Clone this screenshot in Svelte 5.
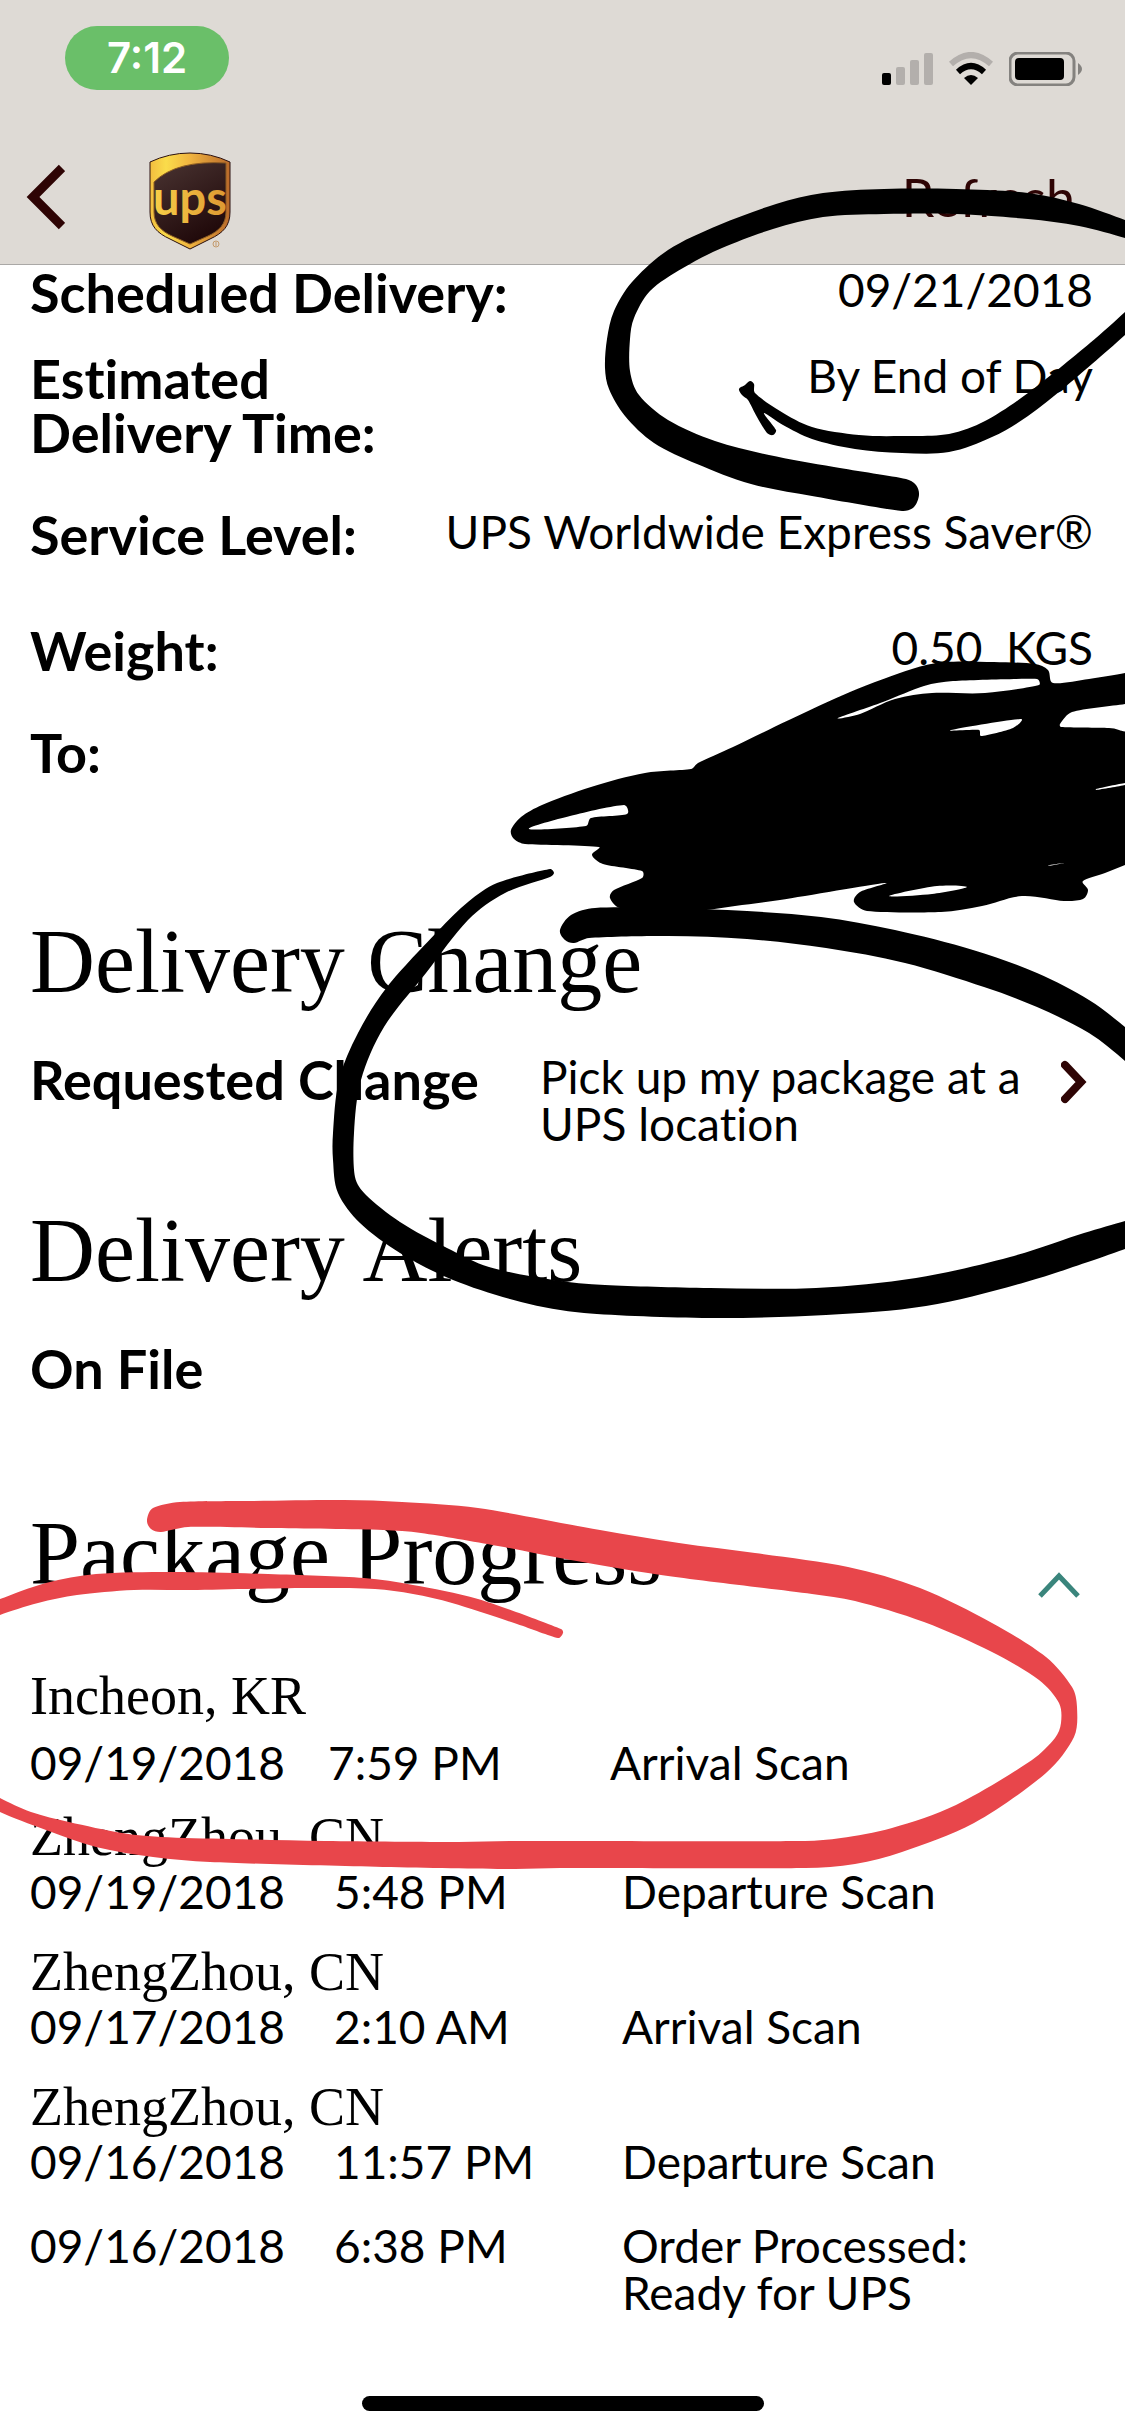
<script>
  const details = [
    { label: 'Scheduled Delivery:', value: '09/21/2018', space: 'tight' },
    { label: 'Estimated Delivery Time:', value: 'By End of Day', space: 'normal' },
    { label: 'Service Level:', value: 'UPS Worldwide Express Saver®', space: 'loose' },
    { label: 'Weight:', value: '0.50\u00a0 KGS', space: 'normal' },
    { label: 'To:', value: '', space: 'none' }
  ];

  const stops = [
    {
      place: 'Incheon, KR',
      latest: true,
      scans: [{ date: '09/19/2018', time: '7:59 PM', text: 'Arrival Scan' }]
    },
    {
      place: 'ZhengZhou, CN',
      scans: [{ date: '09/19/2018', time: '5:48 PM', text: 'Departure Scan' }]
    },
    {
      place: 'ZhengZhou, CN',
      scans: [{ date: '09/17/2018', time: '2:10 AM', text: 'Arrival Scan' }]
    },
    {
      place: 'ZhengZhou, CN',
      scans: [
        { date: '09/16/2018', time: '11:57 PM', text: 'Departure Scan' },
        { date: '09/16/2018', time: '6:38 PM', text: 'Order Processed: Ready for UPS' }
      ]
    }
  ];

  let open = $state(true);

  // Closed Catmull-Rom curve through a flat list of x, y pairs.
  function smooth(flat) {
    const p = [];
    for (let i = 0; i < flat.length; i += 2) p.push([flat[i], flat[i + 1]]);
    const n = p.length;
    let d = `M${p[0][0]} ${p[0][1]}`;
    for (let i = 0; i < n; i++) {
      const a = p[(i + n - 1) % n];
      const b = p[i];
      const c = p[(i + 1) % n];
      const e = p[(i + 2) % n];
      // Handles never reach further than a third of the segment, so corners stay clean.
      const len = Math.hypot(c[0] - b[0], c[1] - b[1]);
      const handle = (u, v) => {
        const m = Math.hypot(v[0] - u[0], v[1] - u[1]) || 1;
        const k = Math.min(m / 6, len / 3) / m;
        return [(v[0] - u[0]) * k, (v[1] - u[1]) * k];
      };
      const h1 = handle(a, c);
      const h2 = handle(b, e);
      d += `C${b[0] + h1[0]} ${b[1] + h1[1]} ${c[0] - h2[0]} ${c[1] - h2[1]} ${c[0]} ${c[1]}`;
    }
    return d + 'Z';
  }

  const dateLoop = [
    1145,228, 1125,220, 1079,204, 1028,193, 956,189, 884,189, 823,193, 776,204, 719,225, 668,250,
    632,282, 614,311, 607,339, 605,368, 609,389, 625,416, 654,443, 697,464, 751,484, 812,496,
    902,511, 914,507, 919,495, 916,485, 906,479, 834,467, 769,455, 715,441, 668,420, 639,395,
    630,371, 630,339, 634,318, 650,291, 683,268, 722,248, 773,229, 823,217, 884,214, 956,214,
    1028,219, 1079,226, 1125,238, 1145,246
  ];
  const dateTail = [
    1145,292, 1125,312, 1090,343, 1028,393, 985,421, 949,434, 902,436, 859,435, 812,427, 780,411,
    755,393, 754,384, 750,381, 745,385, 739,389, 742,395, 748,400, 757,417, 767,433, 773,435,
    776,430, 764,413, 783,425, 812,439, 855,449, 902,453, 949,452, 992,437, 1028,416, 1065,387,
    1100,357, 1125,335, 1145,315
  ];
  const changeLoop = [
    550,869, 497,883, 468,902, 439,930, 387,987, 358,1033, 339,1080, 333,1133, 333,1160, 338,1193,
    360,1223, 400,1253, 453,1280, 521,1302, 584,1313, 710,1318, 826,1315, 926,1306, 1026,1282,
    1125,1249, 1145,1240, 1145,1214, 1125,1221, 1084,1233, 1010,1257, 916,1278, 816,1288, 710,1288,
    605,1285, 553,1280, 489,1267, 447,1248, 400,1222, 366,1195, 355,1177, 354,1133, 361,1080,
    384,1027, 426,973, 468,920, 505,893, 550,877, 554,873
  ];
  const changeArc = [
    1145,1045, 1125,1027, 1089,1000, 1037,973, 973,950, 895,930, 821,917, 747,911, 668,908,
    595,908, 571,915, 560,930, 565,940, 574,943, 589,938, 668,936, 747,939, 826,948, 905,963,
    984,987, 1037,1007, 1089,1033, 1125,1061, 1145,1082
  ];
  const redaction = [
    [
      511,830, 521,817, 542,805, 591,787, 645,773, 691,769, 698,763, 733,747, 789,720, 850,692,
      912,669, 945,662, 994,662, 1035,664, 1048,670, 1053,683, 1089,679, 1125,673, 1145,669,
      1145,700, 1125,704, 1072,712, 1060,724, 1061,727, 1109,728, 1119,730, 1145,742, 1145,856,
      1125,865, 1105,873, 1083,881, 1088,890, 1083,899, 1064,901, 1022,896, 982,906, 941,912,
      867,911, 854,902, 860,892, 885,883, 780,900, 735,906, 694,911, 620,908, 610,898, 614,890,
      642,878, 642,871, 603,864, 592,855, 599,847, 525,844, 514,839
    ],
    [838,718, 860,714, 895,699, 932,693, 985,693, 1039,685, 1037,679, 953,681, 924,686, 883,702],
    [951,730, 1021,719, 1013,728, 981,736, 979,730],
    [529,829, 570,816, 624,805, 627,814, 591,818, 586,826],
    [889,896, 937,886, 967,887, 932,894],
    [1096,789, 1125,783, 1125,785, 1096,790],
    [1048,866, 1064,863, 1050,865]
  ];
  const scanLoop = [
    147,1520, 153,1508, 180,1502, 249,1501, 344,1500, 402,1502, 478,1508, 600,1530, 679,1543,
    755,1553, 848,1567, 920,1588, 992,1623, 1046,1657, 1072,1687, 1077,1707, 1074,1737, 1046,1773,
    974,1823, 902,1852, 855,1864, 805,1868, 560,1868, 513,1869, 383,1867, 210,1862, 153,1857,
    96,1847, 46,1830, 0,1812, -20,1800, -20,1786, 0,1798, 31,1812, 69,1822, 122,1833, 161,1837,
    230,1839, 325,1841, 459,1842, 513,1841, 805,1841, 841,1838, 892,1828, 956,1805, 1032,1760,
    1055,1738, 1061,1723, 1059,1703, 1039,1680, 992,1652, 924,1622, 855,1601, 812,1594, 661,1575,
    560,1558, 498,1546, 421,1533, 383,1530, 268,1528, 188,1527, 161,1532, 151,1529
  ];
  const scanTail = [
    -20,1606, 0,1599, 46,1583, 96,1574, 172,1572, 268,1574, 364,1578, 413,1585, 478,1599, 561,1629,
    563,1633, 558,1638, 517,1624, 452,1603, 413,1594, 375,1589, 306,1588, 191,1590, 134,1590,
    77,1595, 38,1603, 0,1615, -20,1624
  ];

  const blackInk = [dateLoop, dateTail, changeLoop, changeArc].map(smooth);
  const redInk = [scanLoop, scanTail].map(smooth);
  const redactionPath = redaction.map(smooth).join('');
</script>

<div class="screen">
  <header>
    <div class="status">
      <span class="clock">7:12</span>
      <div class="indicators">
        <svg width="51" height="34" viewBox="0 0 51 34" aria-label="Signal">
          <rect x="0" y="21" width="9" height="12" rx="2" />
          <g fill="#b3afac">
            <rect x="14" y="15" width="9" height="18" rx="2" />
            <rect x="28" y="8" width="9" height="25" rx="2" />
            <rect x="42" y="1" width="9" height="32" rx="2" />
          </g>
        </svg>
        <svg width="46" height="34" viewBox="0 0 46 34" aria-label="Wi-Fi">
          <path d="M3 12Q23 -6 43 12" fill="none" stroke="#b3afac" stroke-width="6" />
          <path d="M10 20Q23 8 36 20" fill="none" stroke="#000" stroke-width="6" />
          <path d="M16 26Q23 20 30 26L23 33Z" />
        </svg>
        <svg width="73" height="34" viewBox="0 0 73 34" aria-label="Battery">
          <rect x="1" y="1" width="64" height="32" rx="8" fill="none" stroke="#84827f" stroke-width="3" />
          <rect x="6" y="6" width="49" height="22" rx="4" />
          <path d="M69 11Q73 14 73 17T69 23Z" fill="#84827f" />
        </svg>
      </div>
    </div>
    <nav>
      <button class="back" aria-label="Back">
        <svg width="40" height="66" viewBox="0 0 40 66">
          <path d="M37 4L8 33L37 62" fill="none" stroke="#2e0404" stroke-width="9" />
        </svg>
      </button>
      <svg class="logo" width="82" height="98" viewBox="0 0 82 98" role="img" aria-label="UPS">
        <defs>
          <linearGradient id="gold" x1="0" x2="1">
            <stop offset="0" stop-color="#f2bd3f" />
            <stop offset=".2" stop-color="#fadc4b" />
            <stop offset=".5" stop-color="#f0b440" />
            <stop offset="1" stop-color="#b9692a" />
          </linearGradient>
          <linearGradient id="letter" x1="0" x2="1">
            <stop offset="0" stop-color="#f8cf48" />
            <stop offset="1" stop-color="#dd9832" />
          </linearGradient>
          <linearGradient id="brown" x1="0" x2=".5" y1="0" y2="1">
            <stop offset="0" stop-color="#4a3432" />
            <stop offset="1" stop-color="#210a0b" />
          </linearGradient>
        </defs>
        <path d="M1 10Q20 1 41 1T81 10V60C81 74 74 81 61 87L41 97L21 87C8 81 1 74 1 60Z" fill="url(#gold)" stroke="#2a1010" />
        <path d="M5 30Q27 8 77 11V60C77 72 70 79 59 84L41 92L23 84C12 79 5 72 5 60Z" fill="url(#brown)" stroke="#8a5a22" />
        <text x="41" y="63" text-anchor="middle" fill="url(#letter)">ups</text>
        <circle cx="67" cy="92" r="3" fill="none" stroke="#c49a6c" stroke-width="1" />
        <path d="M67 90V94" stroke="#c49a6c" />
      </svg>
      <button class="refresh">Refresh</button>
    </nav>
  </header>

  <main>
    <dl>
      {#each details as d}
        <div class="row {d.space}">
          <dt>{d.label}</dt>
          <dd>{d.value}</dd>
        </div>
      {/each}
    </dl>

    <section class="change">
      <h2>Delivery Change</h2>
      <a class="request" href="#change">
        <strong>Requested Change</strong>
        <span>Pick up my package at a UPS location</span>
        <svg width="26" height="44" viewBox="0 0 26 44" aria-hidden="true">
          <path d="M4 5L20 22L4 39" fill="none" stroke="#2e0404" stroke-width="8" stroke-linecap="round" />
        </svg>
      </a>
    </section>

    <section class="alerts">
      <h2>Delivery Alerts</h2>
      <strong>On File</strong>
    </section>

    <section class="progress">
      <div class="title">
        <h2>Package Progress</h2>
        <button aria-label="Toggle package progress" aria-expanded={open} onclick={() => (open = !open)}>
          <svg width="42" height="26" viewBox="0 0 42 26">
            <path d="M2 24L21 4L40 24" fill="none" stroke="#3a857c" stroke-width="5" />
          </svg>
        </button>
      </div>
      {#if open}
        <ol>
          {#each stops as stop}
            <li class:latest={stop.latest}>
              <h3>{stop.place}</h3>
              {#each stop.scans as scan}
                <div class="scan">
                  <time>{scan.date}</time>
                  <time>{scan.time}</time>
                  <span>{scan.text}</span>
                </div>
              {/each}
            </li>
          {/each}
        </ol>
      {/if}
    </section>
  </main>

  <div class="home"></div>

  <svg class="ink" viewBox="0 0 1125 2436" aria-hidden="true">
    {#each blackInk as d}
      <path {d} />
    {/each}
    <path d={redactionPath} fill-rule="evenodd" />
    {#each redInk as d}
      <path {d} fill="#e8464b" />
    {/each}
  </svg>
</div>

<style>
  :global(body) {
    margin: 0;
    background: #fff;
  }
  .screen {
    position: relative;
    overflow: hidden;
    color: #000;
    font: 400 46px/47px Lato, sans-serif;
    font-variant-ligatures: none;
  }
  header {
    box-sizing: border-box;
    padding-bottom: 14px;
    background: #dedad5;
    border-bottom: 1px solid #aaa8a6;
  }
  .status {
    display: flex;
    justify-content: space-between;
    align-items: flex-start;
    padding: 26px 43px 0 65px;
  }
  .clock {
    padding: 0 42px;
    border-radius: 32px;
    background: #6abf69;
    color: #fff;
    font: 600 42px/64px Inter, sans-serif;
  }
  .indicators {
    display: flex;
    gap: 15px;
    padding-top: 26px;
  }
  nav {
    display: flex;
    align-items: center;
    padding: 62px 50px 0 25px;
  }
  button {
    margin: 0;
    padding: 0;
    border: 0;
    background: none;
    font: inherit;
    cursor: pointer;
  }
  svg {
    display: block;
  }
  .back,
  .refresh {
    padding-bottom: 8px;
  }
  .logo {
    margin-left: 84px;
  }
  .logo text {
    font: 700 47px 'Liberation Sans Narrow', Lato, sans-serif;
  }
  .refresh {
    margin-left: auto;
    color: #2e0404;
    font: 400 52px/56px Lato, sans-serif;
  }
  main {
    padding: 1px 32px 0 30px;
  }
  dl,
  dd,
  h2,
  h3,
  ol {
    margin: 0;
    padding: 0;
  }
  .row {
    display: flex;
    justify-content: space-between;
  }
  .tight {
    margin-bottom: 32px;
  }
  .normal {
    margin-bottom: 48px;
  }
  .loose {
    margin-bottom: 62px;
  }
  dt,
  strong {
    font: 700 54px/54px Lato, sans-serif;
    font-variant-ligatures: none;
  }
  .row:nth-child(2) dt {
    max-width: 400px;
  }
  dd {
    text-align: right;
  }
  h2 {
    font: 400 90px/104px 'Liberation Serif', serif;
  }
  h3 {
    font: 400 54px/62px 'Liberation Serif', serif;
  }
  .change {
    margin-top: 130px;
  }
  .request {
    display: flex;
    margin-top: 39px;
    color: inherit;
    text-decoration: none;
  }
  .request strong {
    flex: none;
    width: 510px;
  }
  .request span {
    flex: 1;
  }
  .request svg {
    flex: none;
    margin: 7px 6px 0 0;
  }
  .alerts {
    margin-top: 52px;
  }
  .alerts strong {
    display: block;
    margin-top: 39px;
  }
  .progress {
    margin-top: 106px;
  }
  .title {
    display: flex;
    justify-content: space-between;
    align-items: flex-end;
    padding-right: 13px;
    margin-bottom: 59px;
  }
  .title button {
    padding-bottom: 8px;
  }
  ol {
    display: grid;
    gap: 26px;
    list-style: none;
  }
  .scan {
    display: grid;
    grid-template-columns: 304px 288px minmax(0, 400px);
  }
  .scan + .scan {
    margin-top: 37px;
  }
  .latest {
    margin-bottom: -6px;
  }
  .latest .scan {
    grid-template-columns: 298px 282px 1fr;
    margin-top: 12px;
  }
  .home {
    width: 402px;
    height: 15px;
    margin: 80px auto 24px;
    border-radius: 8px;
    background: #000;
  }
  .ink {
    position: absolute;
    top: 0;
    left: 0;
    width: 100%;
    pointer-events: none;
  }
</style>
